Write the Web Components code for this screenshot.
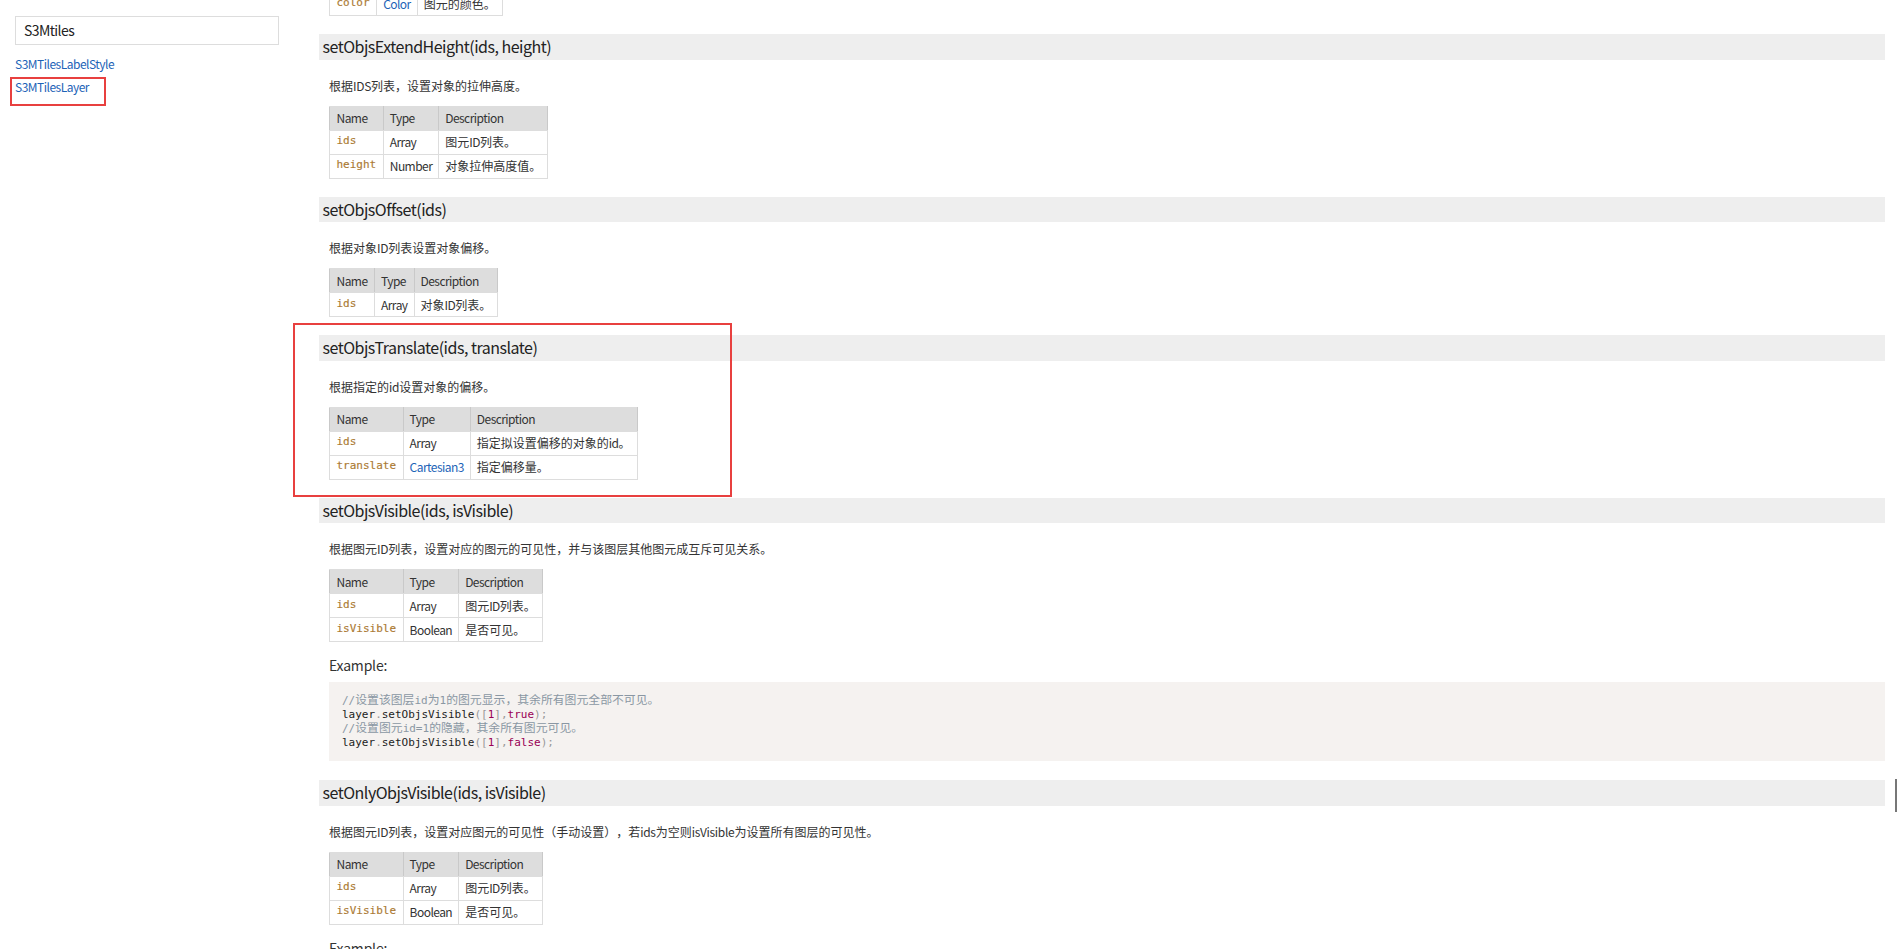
<!DOCTYPE html>
<html lang="zh">
<head>
<meta charset="utf-8">
<title>S3MTilesLayer</title>
<style>
	html, body { margin: 0; height: 949px; overflow: hidden; background: #fff; }
	body {
		position: relative;
		display: grid;
		grid-template-columns: 319px 1566px;
		font-family: "Noto Sans CJK SC", "Noto Sans", sans-serif;
		color: #333;
	}
	.clip { height: 949px; overflow: hidden; }
	.top-table { margin-top: -9px; }
</style>
</head>
<body>
	<doc-sidebar>
		<a href="#label">S3MTilesLabelStyle</a>
		<a href="#layer">S3MTilesLayer</a>
	</doc-sidebar>

	<div class="clip">
		<param-table class="top-table" rows='[["color","Color","图元的颜色。",1]]'></param-table>

		<api-method name="setObjsExtendHeight(ids, height)" desc="根据IDS列表，设置对象的拉伸高度。">
			<param-table rows='[["ids","Array","图元ID列表。"],["height","Number","对象拉伸高度值。"]]'></param-table>
		</api-method>

		<api-method name="setObjsOffset(ids)" desc="根据对象ID列表设置对象偏移。">
			<param-table rows='[["ids","Array","对象ID列表。"]]'></param-table>
		</api-method>

		<api-method name="setObjsTranslate(ids, translate)" desc="根据指定的id设置对象的偏移。">
			<param-table rows='[["ids","Array","指定拟设置偏移的对象的id。"],["translate","Cartesian3","指定偏移量。",1]]'></param-table>
		</api-method>

		<api-method name="setObjsVisible(ids, isVisible)" desc="根据图元ID列表，设置对应的图元的可见性，并与该图层其他图元成互斥可见关系。">
			<param-table rows='[["ids","Array","图元ID列表。"],["isVisible","Boolean","是否可见。"]]'></param-table>
			<code-example>
<span class="c">//<i>设置该图层</i>id<i>为</i>1<i>的图元显示，其余所有图元全部不可见。</i></span>
layer<span class="p">.</span>setObjsVisible<span class="p">([</span><span class="k">1</span><span class="p">],</span><span class="k">true</span><span class="p">);</span>
<span class="c">//<i>设置图元</i>id=1<i>的隐藏，其余所有图元可见。</i></span>
layer<span class="p">.</span>setObjsVisible<span class="p">([</span><span class="k">1</span><span class="p">],</span><span class="k">false</span><span class="p">);</span></code-example>
		</api-method>

		<api-method name="setOnlyObjsVisible(ids, isVisible)" desc="根据图元ID列表，设置对应图元的可见性（手动设置），若ids为空则isVisible为设置所有图层的可见性。">
			<param-table rows='[["ids","Array","图元ID列表。"],["isVisible","Boolean","是否可见。"]]'></param-table>
			<code-example></code-example>
		</api-method>
	</div>

	<mark-box style="left:10px;top:77px;width:96px;height:29px"></mark-box>
	<mark-box style="left:293px;top:323px;width:439px;height:174px"></mark-box>
	<scroll-tick></scroll-tick>

<script>
	const latin = (text) => text.replace(/[A-Za-z0-9]+/g, '<span class="l">$&</span>');

	customElements.define('doc-sidebar',
		class DocSidebar extends HTMLElement {
			constructor() {
				super();
				this.attachShadow({ mode: 'open' });
				this.shadowRoot.innerHTML = `
					<style>
						:host { display: block; padding: 16px 40px 0 15px; font-size: 12px; }
						.search {
							box-sizing: border-box;
							height: 29px;
							padding-left: 8px;
							border: 1px solid #ddd;
							color: #222;
							font-size: 14px;
							letter-spacing: -0.6px;
							line-height: 27px;
						}
						nav { display: flex; flex-direction: column; margin-top: 7px; }
						::slotted(a) {
							height: 23px;
							line-height: 23px;
							color: #1d63b7;
							letter-spacing: -0.5px;
							text-decoration: none;
						}
					</style>
					<div class="search">S3Mtiles</div>
					<nav><slot></slot></nav>
				`;
			}
		}
	);

	customElements.define('api-method',
		class ApiMethod extends HTMLElement {
			constructor() {
				super();
				this.attachShadow({ mode: 'open' });
				this.shadowRoot.innerHTML = `
					<style>
						:host { display: block; padding-top: 18px; }
						h4 {
							margin: 0;
							height: 25.5px;
							padding-left: 3.5px;
							background: #eee;
							color: #222;
							font-size: 16px;
							font-weight: 400;
							letter-spacing: -0.5px;
							line-height: 25px;
						}
						p {
							margin: 16px 0 10px 10px;
							font-size: 12px;
							line-height: 20px;
							text-spacing-trim: space-all;
							white-space: nowrap;
						}
						.l { letter-spacing: -0.3px; }
					</style>
					<h4></h4>
					<p></p>
					<slot></slot>
				`;
				this.shadowRoot.querySelector('h4').textContent = this.getAttribute('name');
				this.shadowRoot.querySelector('p').innerHTML = latin(this.getAttribute('desc'));
			}
		}
	);

	customElements.define('param-table',
		class ParamTable extends HTMLElement {
			constructor() {
				super();
				this.attachShadow({ mode: 'open' });
				const rows = JSON.parse(this.getAttribute('rows'));
				const body = rows.map(([name, type, desc, link]) => `
					<tr>
						<td class="name"><span>${name}</span></td>
						<td class="l">${link ? `<a href="#">${type}</a>` : type}</td>
						<td>${latin(desc)}</td>
					</tr>
				`).join('');
				const head = this.classList.contains('top-table') ? '' : `
					<tr><th class="l">Name</th><th class="l">Type</th><th class="l">Description</th></tr>
				`;
				this.shadowRoot.innerHTML = `
					<style>
						:host { display: block; margin-left: 10px; }
						table { border-collapse: collapse; font-size: 12px; color: #333; }
						th, td {
							height: 24px;
							padding: 0 6px;
							border: 1px solid #ddd;
							box-sizing: border-box;
							line-height: 16px;
							text-align: left;
							white-space: nowrap;
						}
						th:first-child, td:first-child { padding: 0 6.5px; }
						th { background: #ddd; font-weight: 400; border-color: #ddd #c9c9c9; }
						.l { letter-spacing: -0.55px; }
						.name {
							color: #ab7a33;
							font-family: "DejaVu Sans Mono", monospace;
							font-size: 11px;
							-webkit-text-stroke: 0.15px #ab7a33;
						}
						.name span { position: relative; top: -1px; }
						a { color: #1d63b7; text-decoration: none; }
					</style>
					<table>${head}${body}</table>
				`;
			}
		}
	);

	customElements.define('code-example',
		class CodeExample extends HTMLElement {
			constructor() {
				super();
				this.attachShadow({ mode: 'open' });
				this.shadowRoot.innerHTML = `
					<style>
						:host { display: block; }
						h5 { margin: 13px 0 7px 10px; color: #333; font-size: 14px; font-weight: 400; letter-spacing: -0.2px; line-height: 20px; }
						pre {
							margin: 0 0 1px 10px;
							padding: 12px 13px 11px;
							background: #f5f2f0;
							color: #222;
							font: 11px/14px "DejaVu Sans Mono", "Noto Sans CJK SC", monospace;
						}
						.c { color: #8a97a3; }
						.c i { font-family: "Noto Sans CJK SC", sans-serif; font-size: 11.85px; font-style: normal; line-height: 0; }
						.p { color: #999; }
						.k { color: #990055; }
					</style>
					<h5>Example:</h5>
					<pre></pre>
				`;
				this.shadowRoot.querySelector('pre').innerHTML = this.innerHTML.trim();
			}
		}
	);

	customElements.define('mark-box',
		class MarkBox extends HTMLElement {
			constructor() {
				super();
				this.attachShadow({ mode: 'open' });
				this.shadowRoot.innerHTML = `
					<style>
						:host { position: absolute; box-sizing: border-box; border: 2px solid #e8403f; pointer-events: none; }
					</style>
				`;
			}
		}
	);

	customElements.define('scroll-tick',
		class ScrollTick extends HTMLElement {
			constructor() {
				super();
				this.attachShadow({ mode: 'open' });
				this.shadowRoot.innerHTML = `
					<style>
						:host { position: absolute; left: 1895px; top: 779px; width: 2px; height: 33px; background: #777; }
					</style>
				`;
			}
		}
	);
</script>
</body>
</html>
